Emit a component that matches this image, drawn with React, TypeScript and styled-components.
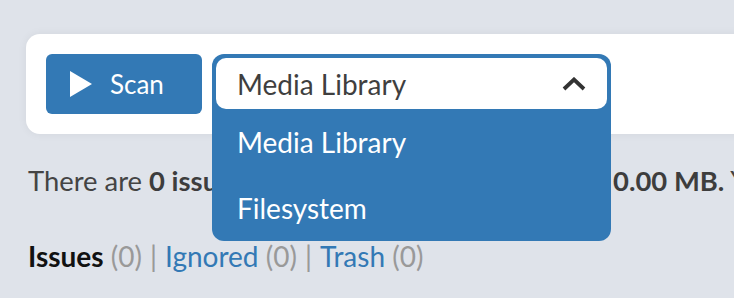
import React from 'react';
import styled, { createGlobalStyle } from 'styled-components';

const GlobalStyle = createGlobalStyle`
  html, body {
    margin: 0;
    padding: 0;
    background: #dfe3ea;
    overflow: hidden;
  }
  body {
    font-family: Lato, "Open Sans", sans-serif;
    color: #444;
  }
`;

const blue = '#3379b5';

const Page = styled.div`
  padding: 34px 0 0 26px;
  width: 1100px;
`;

const Toolbar = styled.div`
  display: flex;
  align-items: flex-start;
  gap: 10px;
  padding: 20px;
  background: #fff;
  border-radius: 14px;
  box-shadow: 0 0 10px rgba(0, 0, 0, 0.06);
`;

const ScanButton = styled.button`
  display: flex;
  align-items: center;
  gap: 18px;
  width: 156px;
  height: 60px;
  padding: 0 0 0 24px;
  border: none;
  border-radius: 6px;
  background: ${blue};
  color: #fff;
  font-family: Lato, sans-serif;
  font-size: 26px;
  cursor: pointer;
`;

const SelectWrap = styled.div`
  position: relative;
  width: 399px;
`;

const SelectFrame = styled.div`
  background: ${blue};
  padding: 4px 4px 0;
  border-radius: 12px 12px 0 0;
`;

const SelectControl = styled.div`
  display: flex;
  align-items: center;
  justify-content: space-between;
  height: 51px;
  padding: 0 21px 0 21px;
  background: #fff;
  border-radius: 10px;
  font-size: 28px;
  color: #3f3f3f;
`;

const Menu = styled.ul`
  position: absolute;
  top: 100%;
  left: 0;
  right: 0;
  margin: 0;
  padding: 0;
  list-style: none;
  background: ${blue};
  border-radius: 0 0 12px 12px;
  z-index: 2;
`;

const MenuItem = styled.li`
  display: flex;
  align-items: center;
  height: 66px;
  padding: 0 25px;
  color: #fff;
  font-size: 28px;
`;

const Summary = styled.p`
  margin: 29px 0 0 2px;
  font-size: 27.4px;
  line-height: 36px;
  white-space: nowrap;
  color: #444;

  b {
    color: #3d3d3d;
  }
`;

const Tabs = styled.div`
  margin: 39px 0 0 2px;
  font-size: 28px;
  line-height: 36px;
  white-space: nowrap;
`;

const Tab = styled.a<{ $active?: boolean }>`
  color: ${p => (p.$active ? '#111' : blue)};
  font-weight: ${p => (p.$active ? 700 : 400)};
  text-decoration: none;
`;

const Count = styled.span`
  color: #999;
`;

const Sep = styled.span`
  color: #999;
  margin: 0 8px;
`;

const PlayIcon = () => (
  <svg width="22" height="26" viewBox="0 0 22 26">
    <polygon points="0,0 22,13 0,26" fill="#fff" />
  </svg>
);

const ChevronUp = () => (
  <svg width="24" height="14" viewBox="0 0 24 14">
    <polyline points="2,12 12,2.5 22,12" fill="none" stroke="#333" strokeWidth="3.8" />
  </svg>
);

const App: React.FC = () => {
  const sources = ['Media Library', 'Filesystem'];

  return (
    <Page>
      <GlobalStyle />
      <Toolbar>
        <ScanButton>
          <PlayIcon />
          Scan
        </ScanButton>
        <SelectWrap>
          <SelectFrame>
            <SelectControl>
              <span>Media Library</span>
              <ChevronUp />
            </SelectControl>
          </SelectFrame>
          <Menu>
            {sources.map(s => (
              <MenuItem key={s}>{s}</MenuItem>
            ))}
          </Menu>
        </SelectWrap>
      </Toolbar>
      <Summary>
        There are <b>0 issues</b> with your files, accounting for <b>0.00 MB.</b> Your trash contains <b>0.00 MB.</b>
      </Summary>
      <Tabs>
        <Tab $active>Issues</Tab> <Count>(0)</Count>
        <Sep>|</Sep>
        <Tab href="#">Ignored</Tab> <Count>(0)</Count>
        <Sep>|</Sep>
        <Tab href="#">Trash</Tab> <Count>(0)</Count>
      </Tabs>
    </Page>
  );
};

export default App;
